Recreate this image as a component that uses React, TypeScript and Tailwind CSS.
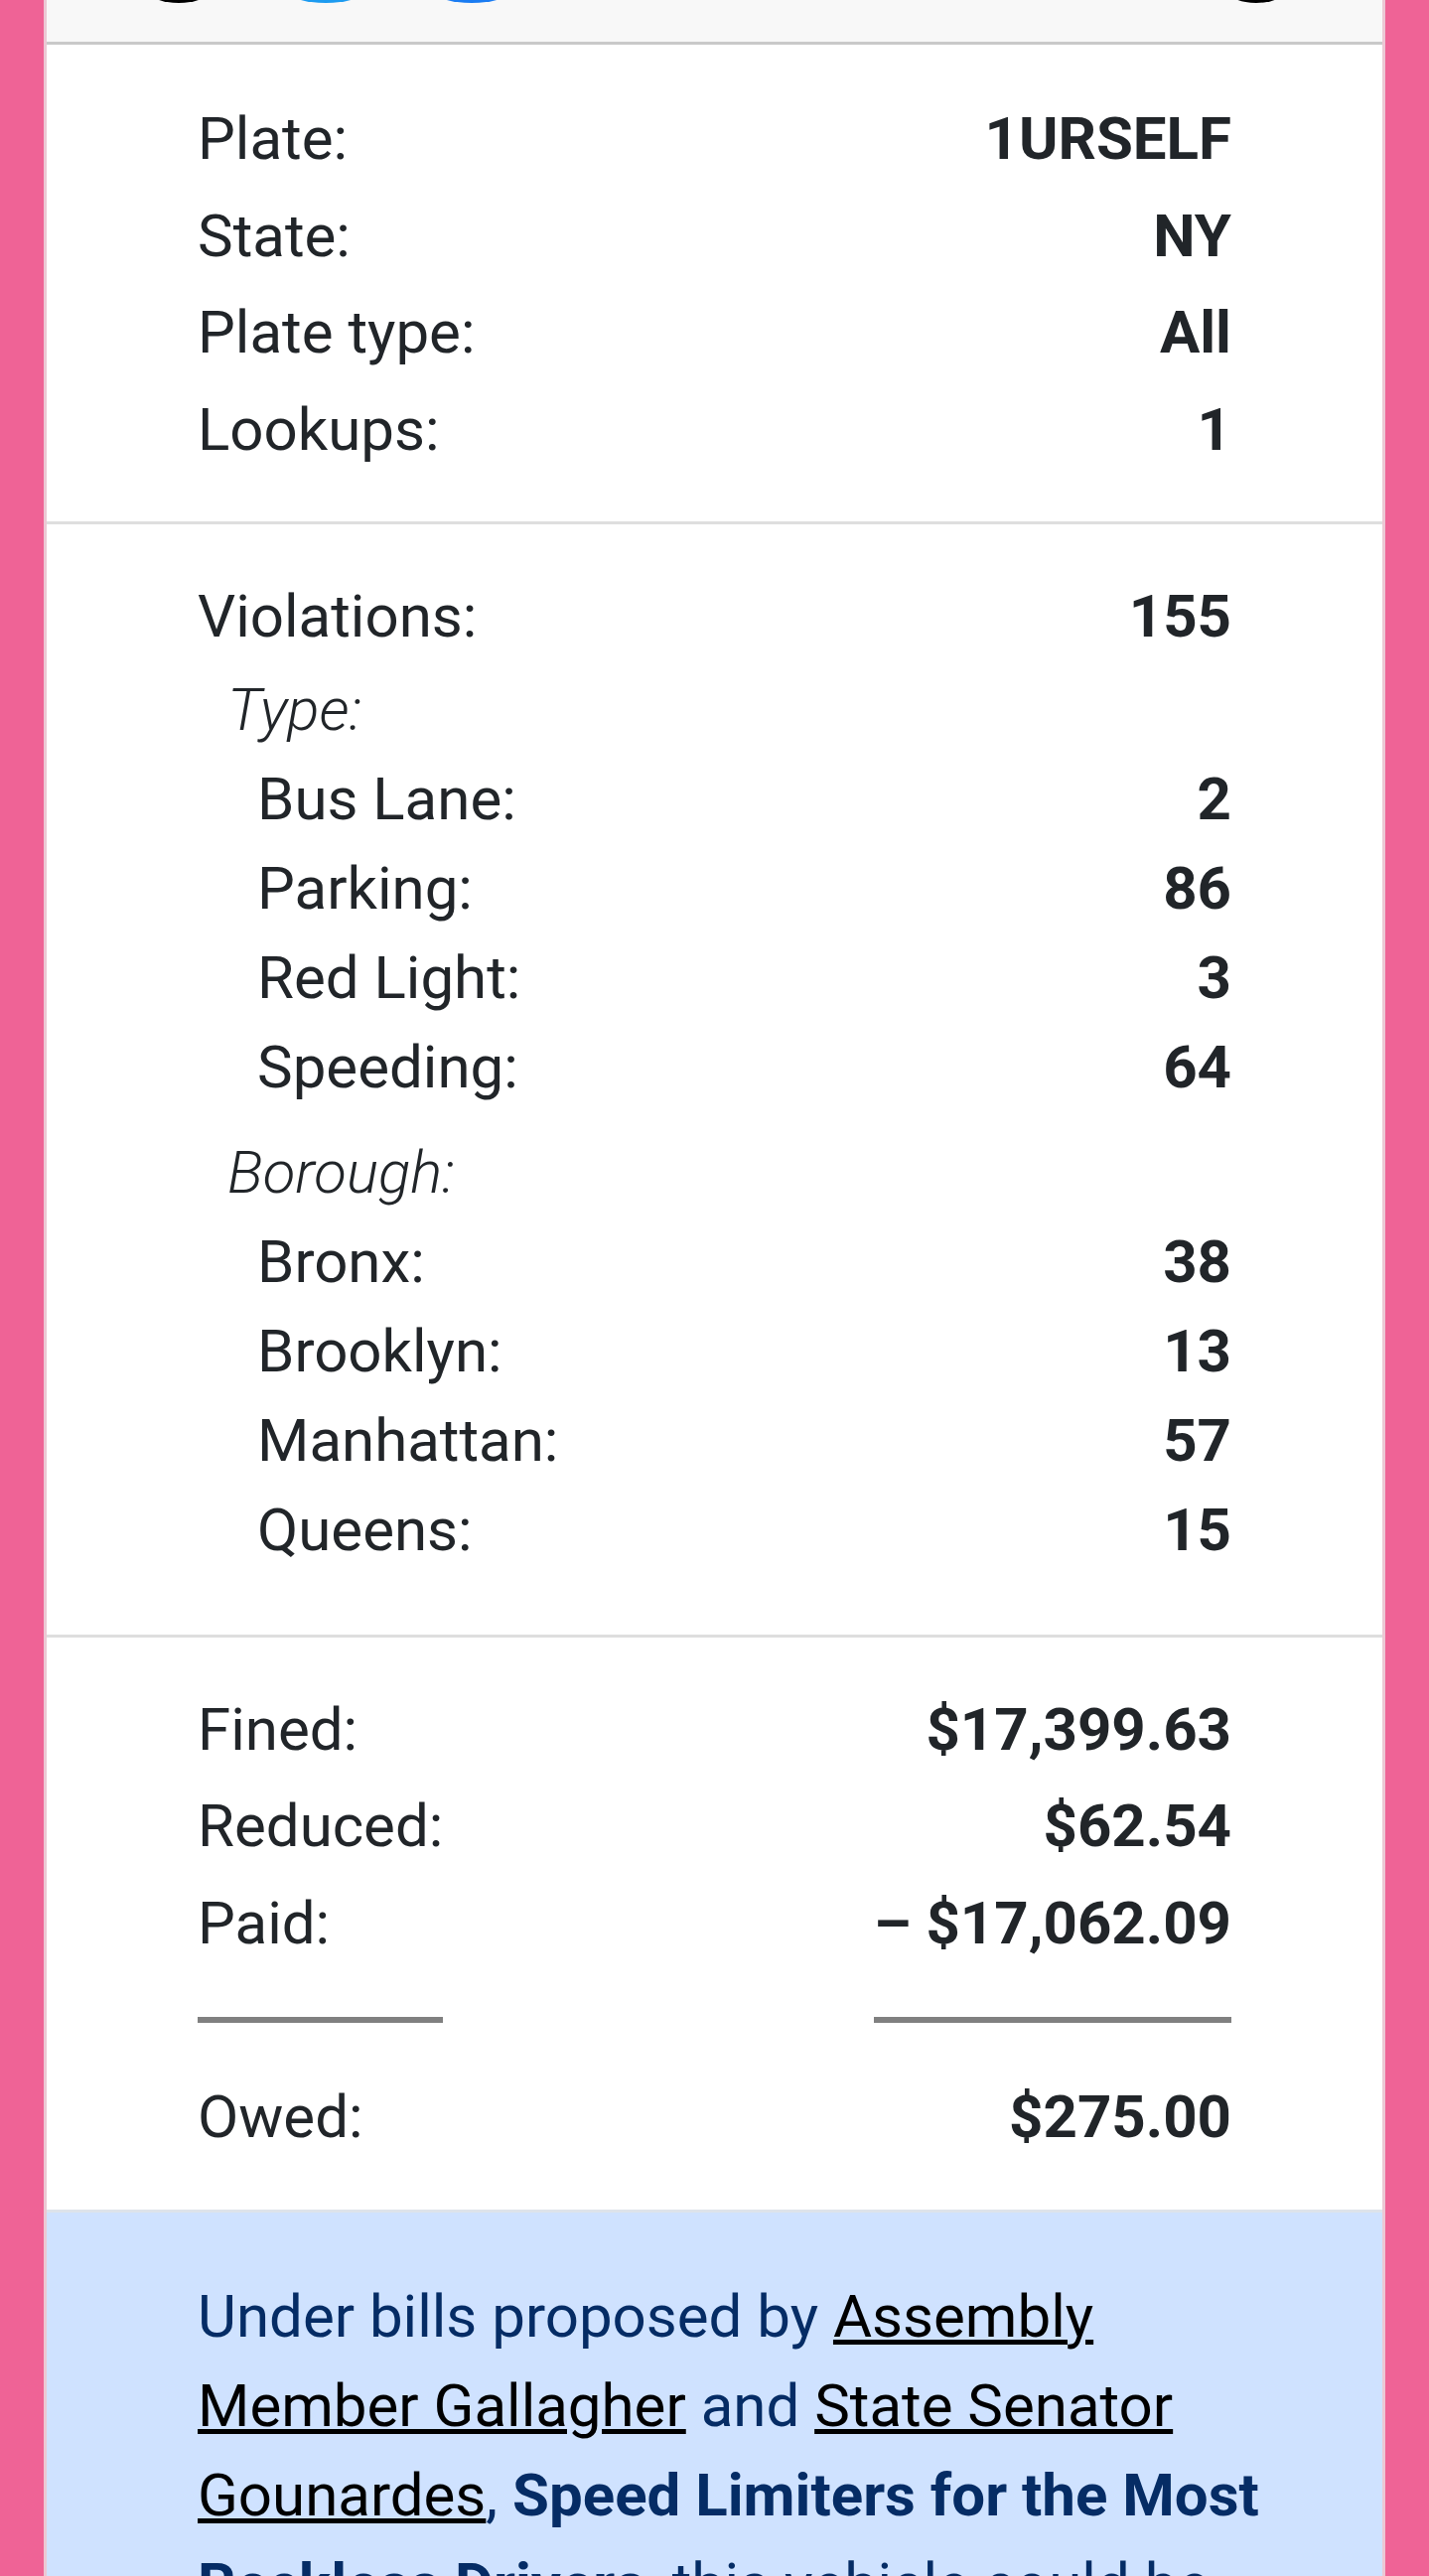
import React from "react"

type Row = { label: string; value: string }

const plateRows: Row[] = [
  { label: "Plate:", value: "1URSELF" },
  { label: "State:", value: "NY" },
  { label: "Plate type:", value: "All" },
  { label: "Lookups:", value: "1" },
]

const byType: Row[] = [
  { label: "Bus Lane:", value: "2" },
  { label: "Parking:", value: "86" },
  { label: "Red Light:", value: "3" },
  { label: "Speeding:", value: "64" },
]

const byBorough: Row[] = [
  { label: "Bronx:", value: "38" },
  { label: "Brooklyn:", value: "13" },
  { label: "Manhattan:", value: "57" },
  { label: "Queens:", value: "15" },
]

const fines: Row[] = [
  { label: "Fined:", value: "$17,399.63" },
  { label: "Reduced:", value: "$62.54" },
  { label: "Paid:", value: "– $17,062.09" },
]

function MainRow({ label, value }: Row) {
  return (
    <div className="flex h-[97.5px] items-center justify-between leading-[97.5px]">
      <span>{label}</span>
      <span className="font-bold">{value}</span>
    </div>
  )
}

function Group({ title, rows }: { title: string; rows: Row[] }) {
  return (
    <div className="mb-[16px]">
      <div className="h-[90px] pl-[30px] font-light italic leading-[90px]">{title}</div>
      {rows.map((r) => (
        <div key={r.label} className="flex h-[90px] items-center justify-between pl-[60px] leading-[90px]">
          <span>{r.label}</span>
          <span className="font-bold">{r.value}</span>
        </div>
      ))}
    </div>
  )
}

function ShareStrip() {
  // bottoms of the share buttons peeking in under the toolbar
  return (
    <div className="flex h-[45px] items-start overflow-hidden border-b-[3px] border-[#c9c9c9] bg-[#f8f8f8]">
      <div className="-mt-[21px] ml-[103px] h-[24px] w-[60px] rounded-[50%] bg-black" />
      <div className="-mt-[21px] ml-[80px] h-[24px] w-[76px] rounded-[50%] bg-[#1d9bf0]" />
      <div className="-mt-[21px] ml-[71px] h-[24px] w-[76px] rounded-[50%] bg-[#1a7cf2]" />
      <div className="-mt-[21px] ml-auto mr-[99px] h-[24px] w-[56px] rounded-[50%] bg-black" />
    </div>
  )
}

export default function App() {
  return (
    <div className="min-h-screen bg-[#ef6396] px-[44px] font-['Roboto','Liberation_Sans',sans-serif] text-[60px] text-[#212529]">
      <div className="border-x-[3px] border-[#ecc8d4] bg-white">
        <ShareStrip />

        <section className="border-b-[3px] border-[#dedede] px-[152px] pt-[46px] pb-[44px]">
          {plateRows.map((r) => (
            <MainRow key={r.label} {...r} />
          ))}
        </section>

        <section className="border-b-[3px] border-[#dedede] px-[152px] pt-[44px] pb-[44px]">
          <MainRow label="Violations:" value="155" />
          <Group title="Type:" rows={byType} />
          <Group title="Borough:" rows={byBorough} />
        </section>

        <section className="px-[152px] pt-[44px] pb-[45px]">
          <div className="grid grid-cols-[auto_1fr_auto]">
            {fines.map((r) => (
              <React.Fragment key={r.label}>
                <span className="h-[97.5px] leading-[97.5px]">{r.label}</span>
                <span />
                <span className="h-[97.5px] text-right font-bold leading-[97.5px]">{r.value}</span>
              </React.Fragment>
            ))}
            <div className="flex h-[97.5px] items-center">
              <div className="h-[6px] w-full bg-[#808080]" />
            </div>
            <span />
            <div className="flex h-[97.5px] items-center">
              <div className="h-[6px] w-full bg-[#808080]" />
            </div>
            <span className="h-[97.5px] leading-[97.5px]">Owed:</span>
            <span />
            <span className="h-[97.5px] text-right font-bold leading-[97.5px]">$275.00</span>
          </div>
        </section>

        <div className="border-t-[3px] border-[#dde3ea] bg-[#cfe2ff] pt-[60px] pr-[96px] pb-[60px] pl-[152px] leading-[90px] text-[#052c65]">
          <p>
            Under bills proposed by{" "}
            <a href="#" className="text-black underline decoration-[5px]">
              Assembly Member Gallagher
            </a>{" "}
            and{" "}
            <a href="#" className="text-black underline decoration-[5px]">
              State Senator Gounardes
            </a>
            , <strong className="font-bold">Speed Limiters for the Most Reckless Drivers</strong>, this vehicle could be
            required to install a speed limiter.
          </p>
        </div>
      </div>
    </div>
  )
}
